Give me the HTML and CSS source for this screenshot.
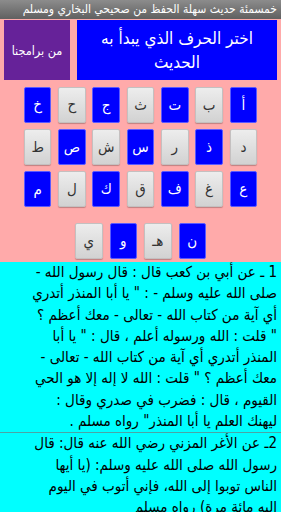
FILE: index.html
```html
<!DOCTYPE html>
<html lang="ar" dir="rtl">
<head>
  <meta charset="UTF-8" />
  <title>خمسمئة حديث</title>
  <link rel="stylesheet" href="styles.css">
</head>
<body>

  <div class="barra-titulo">خمسمئة حديث سهلة الحفظ من صحيحي البخاري ومسلم</div>

  <div class="cabecera">
    <div class="caja-titulo">اختر الحرف الذي يبدأ به<br>الحديث</div>
    <div class="caja-programas">من برامجنا</div>
  </div>

  <div class="letras">
    <div class="letra azul">أ</div>
    <div class="letra gris">ب</div>
    <div class="letra azul">ت</div>
    <div class="letra gris">ث</div>
    <div class="letra azul">ج</div>
    <div class="letra gris">ح</div>
    <div class="letra azul">خ</div>

    <div class="letra gris">د</div>
    <div class="letra azul">ذ</div>
    <div class="letra gris">ر</div>
    <div class="letra azul">س</div>
    <div class="letra gris">ش</div>
    <div class="letra azul">ص</div>
    <div class="letra gris">ط</div>

    <div class="letra azul">ع</div>
    <div class="letra gris">غ</div>
    <div class="letra azul">ف</div>
    <div class="letra gris">ق</div>
    <div class="letra azul">ك</div>
    <div class="letra gris">ل</div>
    <div class="letra azul">م</div>
  </div>

  <div class="letras-final">
    <div class="letra azul">ن</div>
    <div class="letra gris">هـ</div>
    <div class="letra azul">و</div>
    <div class="letra gris">ي</div>
  </div>

  <div class="lista-hadices">
    <div class="hadiz">1 ـ عن أبي بن كعب قال : قال رسول الله -<br>صلى الله عليه وسلم - : " يا أبا المنذر أتدري<br>أي آية من كتاب الله - تعالى - معك أعظم ؟<br>" قلت : الله ورسوله أعلم ، قال : " يا أبا<br>المنذر أتدري أي آية من كتاب الله - تعالى -<br>معك أعظم ؟ " قلت : الله لا إله إلا هو الحي<br>القيوم ، قال : فضرب في صدري وقال :<br>ليهنك العلم يا أبا المنذر" رواه مسلم .</div>
    <div class="hadiz">2ـ عن الأغر المزني رضي الله عنه قال: قال<br>رسول الله صلى الله عليه وسلم: (يا أيها<br>الناس توبوا إلى الله، فإني أتوب في اليوم<br>إليه مائة مرة) رواه مسلم</div>
  </div>

</body>
</html>
```

FILE: styles.css
```css
body {
  margin: 0;
  background-color: #ffaaaa;
  font-family: "DejaVu Sans Condensed", "DejaVu Sans", sans-serif;
  overflow: hidden;
  height: 512px;
}

/* Barra superior */
.barra-titulo {
  height: 19px;
  line-height: 19px;
  padding: 0 4px;
  font-size: 12px;
  color: #fff;
  white-space: nowrap;
  background: linear-gradient(#8c8c8c, #606060);
}

/* Cabecera con dos cajas */
.cabecera {
  display: flex;
  gap: 7px;
  padding: 1px 4px 0 4px;
  height: 60px;
}
.caja-titulo {
  width: 200px;
  background-color: #0000ff;
  color: #fff;
  font-size: 17px;
  line-height: 24px;
  text-align: center;
  white-space: nowrap;
  display: flex;
  align-items: center;
  justify-content: center;
}
.caja-programas {
  flex: 1;
  background-color: #662299;
  color: #fff;
  font-size: 12.5px;
  display: flex;
  align-items: center;
  justify-content: center;
}

/* Botones de letras */
.letras {
  display: grid;
  grid-template-columns: repeat(7, 27.5px);
  grid-auto-rows: 36px;
  column-gap: 6.8px;
  row-gap: 6px;
  justify-content: center;
  margin-top: 7px;
}
.letras-final {
  display: flex;
  justify-content: center;
  gap: 7px;
  margin-top: 16px;
  height: 36px;
}
.letras-final .letra {
  width: 27.5px;
}
.letra {
  box-sizing: border-box;
  display: flex;
  align-items: center;
  justify-content: center;
  font-size: 15px;
  border-radius: 2px;
}
.letra.azul {
  background-color: #0000ff;
  color: #fff;
  border: 1px solid #5a5aff;
}
.letra.gris {
  background: linear-gradient(#ededed, #d2d2d2);
  color: #333;
  border: 1px solid #c4c0c0;
  box-shadow: 0 1px 1px rgba(0, 0, 0, 0.25);
}

/* Lista de hadices */
.lista-hadices {
  margin-top: 3px;
  background-color: #00ffff;
  height: 260px;
}
.hadiz {
  font-size: 15px;
  line-height: 21.3px;
  color: #000;
  padding: 0 4px;
  white-space: nowrap;
  border-bottom: 1px solid #4aa5a5;
}
```
